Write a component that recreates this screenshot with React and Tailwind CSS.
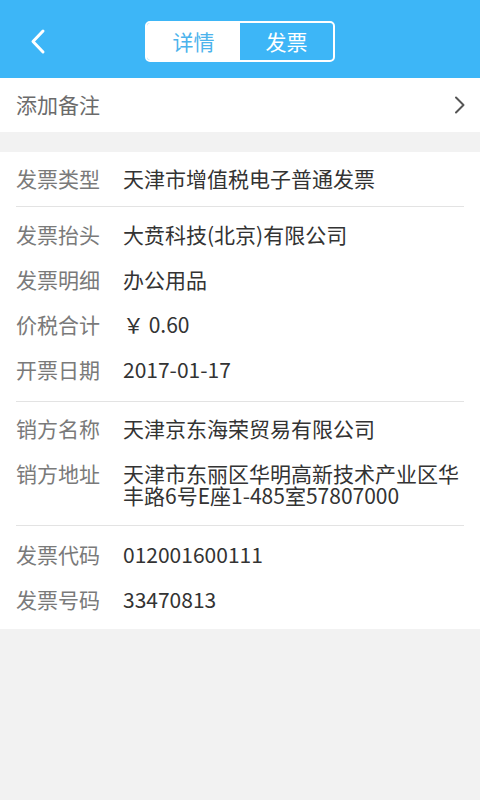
import React from 'react';

const font = { fontFamily: '"Noto Sans CJK SC", "Noto Sans", sans-serif' };

const groups = [
  {
    pad: 'pt-[5px] pb-[4px]',
    rows: [['发票类型', '天津市增值税电子普通发票']],
  },
  {
    pad: 'pt-[6px] pb-[8px]',
    rows: [
      ['发票抬头', '大贲科技(北京)有限公司'],
      ['发票明细', '办公用品'],
      ['价税合计', '￥ 0.60'],
      ['开票日期', '2017-01-17'],
    ],
  },
  {
    pad: 'pt-[5px] pb-[6px]',
    rows: [
      ['销方名称', '天津京东海荣贸易有限公司'],
      ['销方地址', '天津市东丽区华明高新技术产业区华丰路6号E座1-485室57807000'],
    ],
  },
  {
    pad: 'pt-[7px] pb-[6px]',
    rows: [
      ['发票代码', '012001600111'],
      ['发票号码', '33470813'],
    ],
  },
];

const Row = ({ label, value }) => (
  <div className="flex pt-[10px] pb-[13px] text-[21px] leading-[22px]">
    <div className="w-[107px] shrink-0 text-[#7a7a7a]">{label}</div>
    <div className="flex-1 text-[#333333] break-all">{value}</div>
  </div>
);

export default function App() {
  return (
    <div className="min-h-[800px] bg-[#f2f2f2]" style={font}>
      {/* Header */}
      <div className="relative h-[78px] bg-[#3db6f7] flex items-center justify-center">
        <button className="absolute left-[28px] top-[28px]">
          <svg width="20" height="28" viewBox="0 0 20 28" fill="none">
            <path d="M15 3 L5 13.5 L15 24" stroke="white" strokeWidth="3" strokeLinecap="round" strokeLinejoin="round" />
          </svg>
        </button>
        <div className="flex h-[41px] w-[190px] rounded-[5px] border-2 border-white overflow-hidden mt-[5px]">
          <div className="flex-1 bg-white flex items-center justify-center text-[21px] text-[#4cb3ec]">详情</div>
          <div className="flex-1 flex items-center justify-center text-[21px] text-white">发票</div>
        </div>
      </div>

      {/* Remark */}
      <div className="h-[54px] bg-white flex items-center justify-between pl-4 pr-[14px]">
        <span className="text-[21px] text-[#6b6b6b]">添加备注</span>
        <svg width="12" height="18" viewBox="0 0 12 18" fill="none">
          <path d="M2 1.5 L9.5 9 L2 16.5" stroke="#555555" strokeWidth="2" strokeLinecap="round" strokeLinejoin="round" />
        </svg>
      </div>

      {/* Details */}
      <div className="mt-[20px] bg-white px-4">
        {groups.map((g, i) => (
          <div key={i} className={`${g.pad} ${i > 0 ? 'border-t border-[#e3e3e3]' : ''}`}>
            {g.rows.map(([l, v]) => (
              <Row key={l} label={l} value={v} />
            ))}
          </div>
        ))}
      </div>
    </div>
  );
}
